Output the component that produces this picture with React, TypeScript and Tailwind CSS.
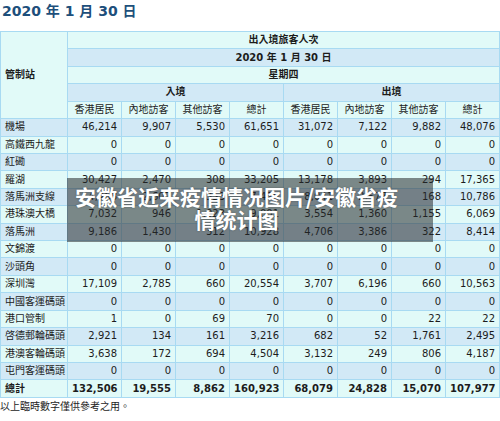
import React from "react";

const CYAN = "bg-[#e1faf8]";
const BLUE = "bg-[#d2e9f6]";

type Row = { name: string; v: string[] };

const rows: Row[] = [
  { name: "機場", v: ["46,214", "9,907", "5,530", "61,651", "31,072", "7,122", "9,882", "48,076"] },
  { name: "高鐵西九龍", v: ["0", "0", "0", "0", "0", "0", "0", "0"] },
  { name: "紅磡", v: ["0", "0", "0", "0", "0", "0", "0", "0"] },
  { name: "羅湖", v: ["30,427", "2,470", "308", "33,205", "13,178", "3,893", "294", "17,365"] },
  { name: "落馬洲支線", v: ["4,468", "2,607", "353", "7,428", "8,041", "2,577", "168", "10,786"] },
  { name: "港珠澳大橋", v: ["7,032", "946", "1,023", "9,001", "3,554", "1,360", "1,155", "6,069"] },
  { name: "落馬洲", v: ["9,186", "1,430", "312", "10,928", "4,706", "3,386", "322", "8,414"] },
  { name: "文錦渡", v: ["0", "0", "0", "0", "0", "0", "0", "0"] },
  { name: "沙頭角", v: ["0", "0", "0", "0", "0", "0", "0", "0"] },
  { name: "深圳灣", v: ["17,109", "2,785", "660", "20,554", "3,707", "6,196", "660", "10,563"] },
  { name: "中國客運碼頭", v: ["0", "0", "0", "0", "0", "0", "0", "0"] },
  { name: "港口管制", v: ["1", "0", "69", "70", "0", "0", "22", "22"] },
  { name: "啓德郵輪碼頭", v: ["2,921", "134", "161", "3,216", "682", "52", "1,761", "2,495"] },
  { name: "港澳客輪碼頭", v: ["3,638", "172", "694", "4,504", "3,132", "249", "806", "4,187"] },
  { name: "屯門客運碼頭", v: ["0", "0", "0", "0", "0", "0", "0", "0"] },
];

const total = ["132,506", "19,555", "8,862", "160,923", "68,079", "24,828", "15,070", "107,977"];
const subs = ["香港居民", "內地訪客", "其他訪客", "總計", "香港居民", "內地訪客", "其他訪客", "總計"];

const cell = "border border-[#a8daf2] px-[4px] py-0 leading-[16px]";

export default function App() {
  return (
    <div
      className="relative w-[500px] h-[421px] bg-white text-[#1c1c1c] overflow-hidden"
      style={{ fontFamily: '"DejaVu Sans", "Noto Sans CJK TC", sans-serif' }}
    >
      <div className="h-[31px] pl-[2px] pt-[1px] text-[14px] leading-[20px] font-bold text-[#1d4f7b]">
        2020 年 1 月 30 日
      </div>
      <table className="table-fixed border-collapse w-[499px] text-[10px]">
        <colgroup>
          <col className="w-[67px]" />
          {subs.map((_, i) => (
            <col key={i} className="w-[54px]" />
          ))}
        </colgroup>
        <thead>
          <tr className={`h-[17.43px] ${CYAN}`}>
            <th rowSpan={5} className={`${cell} ${CYAN} text-left font-bold`}>
              管制站
            </th>
            <th colSpan={8} className={`${cell} text-center font-bold`}>
              出入境旅客人次
            </th>
          </tr>
          <tr className={`h-[17.43px] ${BLUE}`}>
            <th colSpan={8} className={`${cell} text-center font-bold`}>
              2020 年 1 月 30 日
            </th>
          </tr>
          <tr className={`h-[17.43px] ${CYAN}`}>
            <th colSpan={8} className={`${cell} text-center font-bold`}>
              星期四
            </th>
          </tr>
          <tr className={`h-[17.43px] ${BLUE}`}>
            <th colSpan={4} className={`${cell} text-center font-bold`}>
              入境
            </th>
            <th colSpan={4} className={`${cell} text-center font-bold`}>
              出境
            </th>
          </tr>
          <tr className={`h-[17.43px] ${CYAN}`}>
            {subs.map((s, i) => (
              <th key={i} className={`${cell} text-center font-normal`}>
                {s}
              </th>
            ))}
          </tr>
        </thead>
        <tbody>
          {rows.map((r, ri) => (
            <tr key={r.name} className={`h-[17.43px] ${ri % 2 === 0 ? BLUE : CYAN}`}>
              <td className={`${cell} text-left whitespace-nowrap`}>{r.name}</td>
              {r.v.map((v, i) => (
                <td key={i} className={`${cell} text-right`}>
                  {v}
                </td>
              ))}
            </tr>
          ))}
          <tr className={`h-[17.43px] ${CYAN} font-bold`}>
            <td className={`${cell} text-left`}>總計</td>
            {total.map((v, i) => (
              <td key={i} className={`${cell} text-right`}>
                {v}
              </td>
            ))}
          </tr>
        </tbody>
      </table>
      <div className="text-[10px] leading-[16px] pt-[1px]">以上臨時數字僅供參考之用。</div>

      <div className="absolute left-[67px] top-[178px] w-[366px] h-[64px] bg-[rgba(38,42,44,0.55)] pt-[7px] pr-[27px]">
        <div
          className="text-center text-white font-bold text-[21px] leading-[23px] [text-shadow:0_0_2px_rgba(0,0,0,0.35)]"
          style={{ fontFamily: '"Noto Sans CJK SC", sans-serif' }}
        >
          <div className="whitespace-nowrap">安徽省近来疫情情况图片/安徽省疫</div>
          <div>情统计图</div>
        </div>
      </div>
    </div>
  );
}
